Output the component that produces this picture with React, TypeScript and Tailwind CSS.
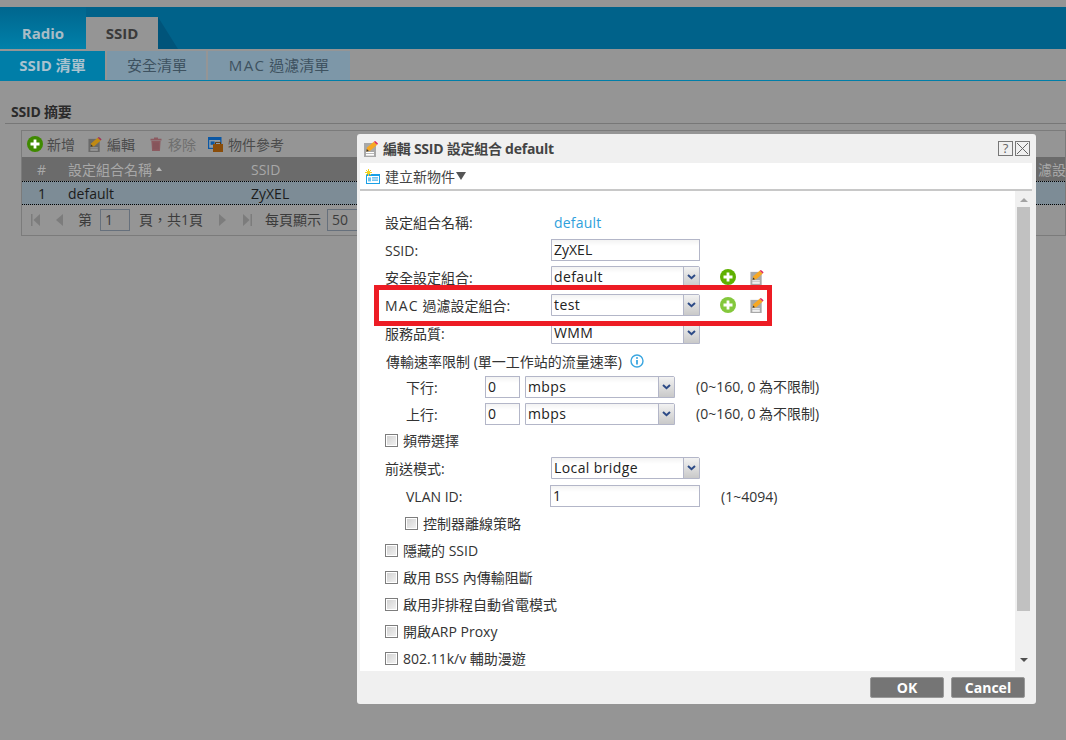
import type { ReactNode } from 'react'

const font = "font-['Open_Sans','Noto_Sans_CJK_TC',sans-serif]"

function PlusIcon({ className = '', color = '#5fb000' }: { className?: string; color?: string }) {
    return (
        <svg viewBox="0 0 16 16" className={className}>
            <circle cx="8" cy="8" r="8" fill={color} />
            <path d="M8 3.5v9M3.5 8h9" stroke="#fff" strokeWidth="2.8" />
        </svg>
    )
}

function EditIcon({ className = '', dim = false }: { className?: string; dim?: boolean }) {
    return (
        <svg viewBox="0 0 14 16" className={className}>
            <rect x="0" y="2" width="12" height="14" fill={dim ? '#6a6a6a' : '#a8a8a8'} />
            <rect x="2" y="11" width="8" height="1.2" fill={dim ? '#a0a0a0' : '#fff'} />
            <rect x="2" y="13" width="8" height="1.6" fill={dim ? '#a0a0a0' : '#fff'} />
            <path d="M2.4 10.4 L3 6.6 L9.8 0.8 L13.2 3.8 L6.2 9.8 Z" fill={dim ? '#c08a14' : '#f7a823'} />
            <path d="M2.4 10.4 L2.8 8 L4.9 9.9 Z" fill="#333" />
            <path d="M9.8 0.8 L11.2 0 L14 2.4 L13.2 3.8 Z" fill={dim ? '#a03058' : '#e0245e'} />
        </svg>
    )
}

function TrashIcon() {
    return (
        <svg viewBox="0 0 12 14" className="h-[14px] w-3">
            <path d="M4 1.2h4M0.5 2.6h11" stroke="#8c5a60" strokeWidth="1.6" />
            <path d="M1.4 4h9.2l-.7 10H2.1z" fill="#8c5a60" />
            <path d="M4 5.5v7M6 5.5v7M8 5.5v7" stroke="#7a4c52" strokeWidth=".6" />
        </svg>
    )
}

function ReferenceIcon() {
    return (
        <svg viewBox="0 0 15 15" className="h-[15px] w-[15px]">
            <rect x="0" y="0" width="13.5" height="12" fill="#0b57a4" />
            <rect x="1.2" y="3" width="11" height="7.8" fill="#8f9da8" />
            <rect x="2.6" y="4.4" width="4" height="3.4" fill="#0b57a4" />
            <path d="M5 7h10v8H5z" fill="#8a4d0a" />
            <path d="M7.5 7V5.4h5V7" fill="none" stroke="#5e3606" strokeWidth="1" />
        </svg>
    )
}

function NewObjectIcon() {
    return (
        <svg viewBox="0 0 15 15" className="h-[15px] w-[15px]">
            <rect x="1" y="5" width="14" height="10" fill="#19a0e6" />
            <rect x="2" y="7" width="12" height="7" fill="#fff" />
            <rect x="7" y="8.4" width="6" height="1" fill="#19a0e6" />
            <rect x="7" y="10.6" width="6" height="1" fill="#19a0e6" />
            <rect x="3" y="8.4" width="3" height="4" fill="#6cc4ee" />
            <path d="M3.5 0v7M0 3.5h7M1 1l5 5M6 1l-5 5" stroke="#f4d21f" strokeWidth="1" />
        </svg>
    )
}

function Input({ value, className = '' }: { value: string; className?: string }) {
    return (
        <div className={`h-[22px] border border-[#b3b6c8] bg-gradient-to-b from-[#f3f3f3] to-white to-30% pl-[2px] text-[14px] leading-[19px] text-[#222] ${className}`}>
            {value}
        </div>
    )
}

function Select({ value, className = '' }: { value: string; className?: string }) {
    return (
        <div className={`flex h-[22px] rounded-tr-[2px] border border-[#b3b6c8] bg-gradient-to-b from-[#f3f3f3] to-white to-30% text-[14px] text-[#222] ${className}`}>
            <span className="flex-1 pl-[2px] leading-[19px] tracking-[0.4px]">{value}</span>
            <span className="flex w-[16px] items-center justify-center border-l border-[#b3b6c8] bg-gradient-to-b from-[#f2f2f2] to-[#c9c9c9]">
                <svg viewBox="0 0 9 6" className="h-[6px] w-[9px]">
                    <path d="M1 1l3.5 3.2L8 1" fill="none" stroke="#2c4a86" strokeWidth="2" />
                </svg>
            </span>
        </div>
    )
}

function Checkbox({ label, className = '' }: { label: string; className?: string }) {
    return (
        <div className={`flex h-[27px] items-center gap-[5px] text-[14px] text-[#333] ${className}`}>
            <span className="h-[13px] w-[13px] border border-[#7d7d7d] bg-gradient-to-br from-[#cfcfcf] to-[#f4f4f4] shadow-[inset_0_0_0_1px_#fff]" />
            <span>{label}</span>
        </div>
    )
}

function Row({ label, children, className = 'h-[28px]', indent = false }: { label: ReactNode; children: ReactNode; className?: string; indent?: boolean }) {
    return (
        <div className={`flex items-center text-[14px] text-[#333] ${className}`}>
            <span className={`w-[166px] shrink-0 pt-px ${indent ? 'pl-[21px]' : ''}`}>{label}</span>
            {children}
        </div>
    )
}

function RateRow({ label }: { label: string }) {
    return (
        <div className="flex h-[27px] items-center text-[14px] text-[#333]">
            <span className="w-[100px] shrink-0 pl-[21px] pt-px">{label}</span>
            <Input value="0" className="w-[35px]" />
            <Select value="mbps" className="ml-[5px] w-[150px]" />
            <span className="ml-[21px]">(0~160, 0 為不限制)</span>
        </div>
    )
}

function Modal() {
    return (
        <div className="absolute left-[357px] top-[134px] flex h-[570px] w-[679px] flex-col rounded-[3px] bg-[#f0f0f0] pl-[3px] pr-[4px]">
            {/* Title */}
            <div className="flex h-[29px] shrink-0 items-center pl-[4px]">
                <EditIcon className="h-[16px] w-[14px]" />
                <span className="ml-[5px] flex-1 text-[14px] font-bold tracking-[-0.25px] text-[#444]">編輯 SSID 設定組合 default</span>
                <span className="flex h-[15px] w-[15px] items-center justify-center border border-[#777] text-[13px] leading-none text-[#666]">?</span>
                <span className="ml-[2px] mr-[2px] flex h-[15px] w-[15px] items-center justify-center border border-[#777]">
                    <svg viewBox="0 0 13 13" className="h-[13px] w-[13px]"><path d="M1 1l11 11M12 1L1 12" stroke="#666" strokeWidth="1" /></svg>
                </span>
            </div>
            {/* Toolbar */}
            <div className="flex h-[28px] shrink-0 items-center border-b-2 border-[#c8c8c8] bg-white pl-[5px] text-[14px] text-[#444]">
                <NewObjectIcon />
                <span className="ml-[5px]">建立新物件</span>
                <span className="ml-[1px] h-0 w-0 border-x-[5px] border-t-[8px] border-x-transparent border-t-[#555]" />
            </div>
            {/* Body */}
            <div className="relative flex min-h-0 flex-1">
                <div className="flex-1 overflow-hidden bg-white pl-[25px] pt-[17px]">
                    <Row label="設定組合名稱:"><span className="pl-[3px] text-[14px] tracking-[0.2px] text-[#2f9fdc]">default</span></Row>
                    <Row label="SSID:" className="h-[27px]"><Input value="ZyXEL" className="w-[149px]" /></Row>
                    <Row label="安全設定組合:">
                        <Select value="default" className="w-[149px]" />
                        <PlusIcon className="ml-[20px] h-4 w-4" />
                        <EditIcon className="ml-[14px] h-[15px] w-[14px]" />
                    </Row>
                    <Row label={<><span className="tracking-[1.2px]">MAC</span> 過濾設定組合:</>}>
                        <Select value="test" className="w-[149px]" />
                        <PlusIcon className="ml-[20px] h-4 w-4" color="#84c83c" />
                        <EditIcon className="ml-[14px] h-[15px] w-[14px]" />
                    </Row>
                    <Row label="服務品質:"><Select value="WMM" className="w-[149px]" /></Row>
                    <div className="mt-[2px] flex h-[24px] items-center text-[14px] text-[#333]">
                        <span className="pl-[1px]">傳輸速率限制 (單一工作站的流量速率)</span>
                        <svg viewBox="0 0 14 14" className="ml-[8px] h-[14px] w-[14px]">
                            <circle cx="7" cy="7" r="6" fill="none" stroke="#3aa6e0" strokeWidth="1.4" />
                            <path d="M7 6v4.4" stroke="#3aa6e0" strokeWidth="1.8" />
                            <circle cx="7" cy="3.9" r="1" fill="#3aa6e0" />
                        </svg>
                    </div>
                    <RateRow label="下行:" />
                    <RateRow label="上行:" />
                    <Checkbox label="頻帶選擇" />
                    <Row label="前送模式:"><Select value="Local bridge" className="w-[149px]" /></Row>
                    <Row label="VLAN ID:" indent>
                        <Input value="1" className="-ml-px w-[150px]" />
                        <span className="ml-[21px] text-[14px]">(1~4094)</span>
                    </Row>
                    <Checkbox label="控制器離線策略" className="pl-[20px]" />
                    <Checkbox label="隱藏的 SSID" />
                    <Checkbox label="啟用 BSS 內傳輸阻斷" />
                    <Checkbox label="啟用非排程自動省電模式" />
                    <Checkbox label="開啟ARP Proxy" />
                    <Checkbox label="802.11k/v 輔助漫遊" />
                </div>
                {/* Scrollbar */}
                <div className="flex w-[17px] shrink-0 flex-col items-center bg-[#f0f0f0] px-[2px]">
                    <span className="mb-[5px] mt-[7px] h-0 w-0 border-x-[4px] border-b-[4px] border-x-transparent border-b-[#a3a3a3]" />
                    <span className="h-[404px] w-[13px] bg-[#c1c1c1]" />
                    <span className="mt-[47px] h-0 w-0 border-x-[4px] border-t-[4px] border-x-transparent border-t-[#505050]" />
                </div>
                {/* Highlight */}
                <div className="absolute left-[14px] top-[94px] h-[41px] w-[398px] border-[5px] border-[#ed1c24]" />
            </div>
            {/* Footer */}
            <div className="flex h-[33px] shrink-0 items-start justify-end gap-[7px] pr-[7px] pt-[6px]">
                <button className="h-[21px] w-[74px] rounded-[2px] border border-[#999] bg-[#757575] text-[14px] font-bold leading-[18px] text-white">OK</button>
                <button className="h-[21px] w-[74px] rounded-[2px] border border-[#999] bg-[#757575] text-[14px] font-bold leading-[18px] text-white">Cancel</button>
            </div>
        </div>
    )
}

export default function App() {
    return (
        <div className={`relative h-[740px] w-[1066px] overflow-hidden bg-[#959595] ${font}`}>
            {/* Top tabs */}
            <div className="mt-[7px] flex h-[42px] items-end bg-[#00628a]">
                <div className="flex h-[42px] w-[86px] items-center justify-center bg-gradient-to-b from-[#00668e] to-[#0081aa] pt-[10px] text-[15px] font-bold text-[#a9bcc6]">Radio</div>
                <div className="flex h-[32px] w-[72px] items-center justify-center bg-[#959595] text-[15px] font-bold text-[#3a3a3a]">SSID</div>
                <div className="h-0 w-0 border-b-[32px] border-r-[20px] border-b-[#00547a] border-r-transparent" />
            </div>
            {/* Sub tabs */}
            <div className="mt-[2px] flex h-[30px] gap-[2px] border-b border-[#007ea8] text-[15px]">
                <div className="flex w-[105px] items-center justify-center bg-[#007ea8] font-bold text-[#a9c2cf]">SSID 清單</div>
                <div className="flex w-[99px] items-center justify-center bg-[#7d97a8] pl-px text-[#3e5260]">安全清單</div>
                <div className="flex w-[142px] items-center justify-center bg-[#7d97a8] text-[#3e5260]"><span className="tracking-[1.4px]">MAC</span>&nbsp;過濾清單</div>
            </div>
            {/* SSID summary */}
            <div className="ml-[5px] mt-[22px] h-[21px] border-b border-[#777] pl-[6px] text-[14px] font-bold leading-[18px] tracking-[-0.2px] text-[#2a2a2a]">SSID 摘要</div>
            <div className="ml-[21px] mt-[6px] h-[106px] border border-[#7b7b7b] text-[14px]">
                <div className="flex h-[26px] items-center pl-[5px] text-[#4b4b4b]">
                    <PlusIcon className="h-4 w-4" color="#3f8a00" />
                    <span className="ml-[4px]">新增</span>
                    <EditIcon dim className="ml-[13px] h-[15px] w-[14px]" />
                    <span className="ml-[5px]">編輯</span>
                    <span className="ml-[15px]"><TrashIcon /></span>
                    <span className="ml-[6px] text-[#6f6f6f]">移除</span>
                    <span className="ml-[12px]"><ReferenceIcon /></span>
                    <span className="ml-[5px]">物件參考</span>
                </div>
                <div className="flex h-[24px] items-center bg-[#6b6b6b] text-[#a8a8a8]">
                    <span className="w-[46px] pl-[15px]">#</span>
                    <span className="flex w-[183px] items-center">設定組合名稱<span className="ml-[4px] h-0 w-0 border-x-[3px] border-b-[4px] border-x-transparent border-b-[#b5b5b5]" /></span>
                    <span className="flex-1">SSID</span>
                    <span className="mr-[-1px] text-right">濾設</span>
                </div>
                <div className="flex h-[24px] items-center border-y border-dotted border-black bg-[#7d8c96] text-[#1c1c1c]">
                    <span className="w-[46px] pl-[16px]">1</span>
                    <span className="w-[183px]">default</span>
                    <span>ZyXEL</span>
                </div>
                <div className="flex h-[29px] items-center pl-[8px] text-[#3c3c3c]">
                    <svg viewBox="0 0 10 12" className="h-3 w-[10px]"><path d="M1 0h1.5v12H1zM10 0v12L3.5 6z" fill="#7c7c7c" /></svg>
                    <svg viewBox="0 0 7 12" className="ml-[16px] h-3 w-[7px]"><path d="M7 0v12L0 6z" fill="#7c7c7c" /></svg>
                    <span className="ml-[15px]">第</span>
                    <span className="ml-[8px] h-[22px] w-[30px] border border-[#66707c] pl-[4px] leading-[20px]">1</span>
                    <span className="ml-[9px]">頁，共1頁</span>
                    <svg viewBox="0 0 7 12" className="ml-[16px] h-3 w-[7px]"><path d="M0 0v12l7-6z" fill="#7c7c7c" /></svg>
                    <svg viewBox="0 0 10 12" className="ml-[17px] h-3 w-[10px]"><path d="M0 0v12l6.5-6zM7.5 0H9v12H7.5z" fill="#7c7c7c" /></svg>
                    <span className="ml-[12px]">每頁顯示</span>
                    <span className="ml-[6px] h-[22px] w-[40px] border border-[#66707c] pl-[4px] leading-[20px]">50</span>
                </div>
            </div>
            <Modal />
        </div>
    )
}
